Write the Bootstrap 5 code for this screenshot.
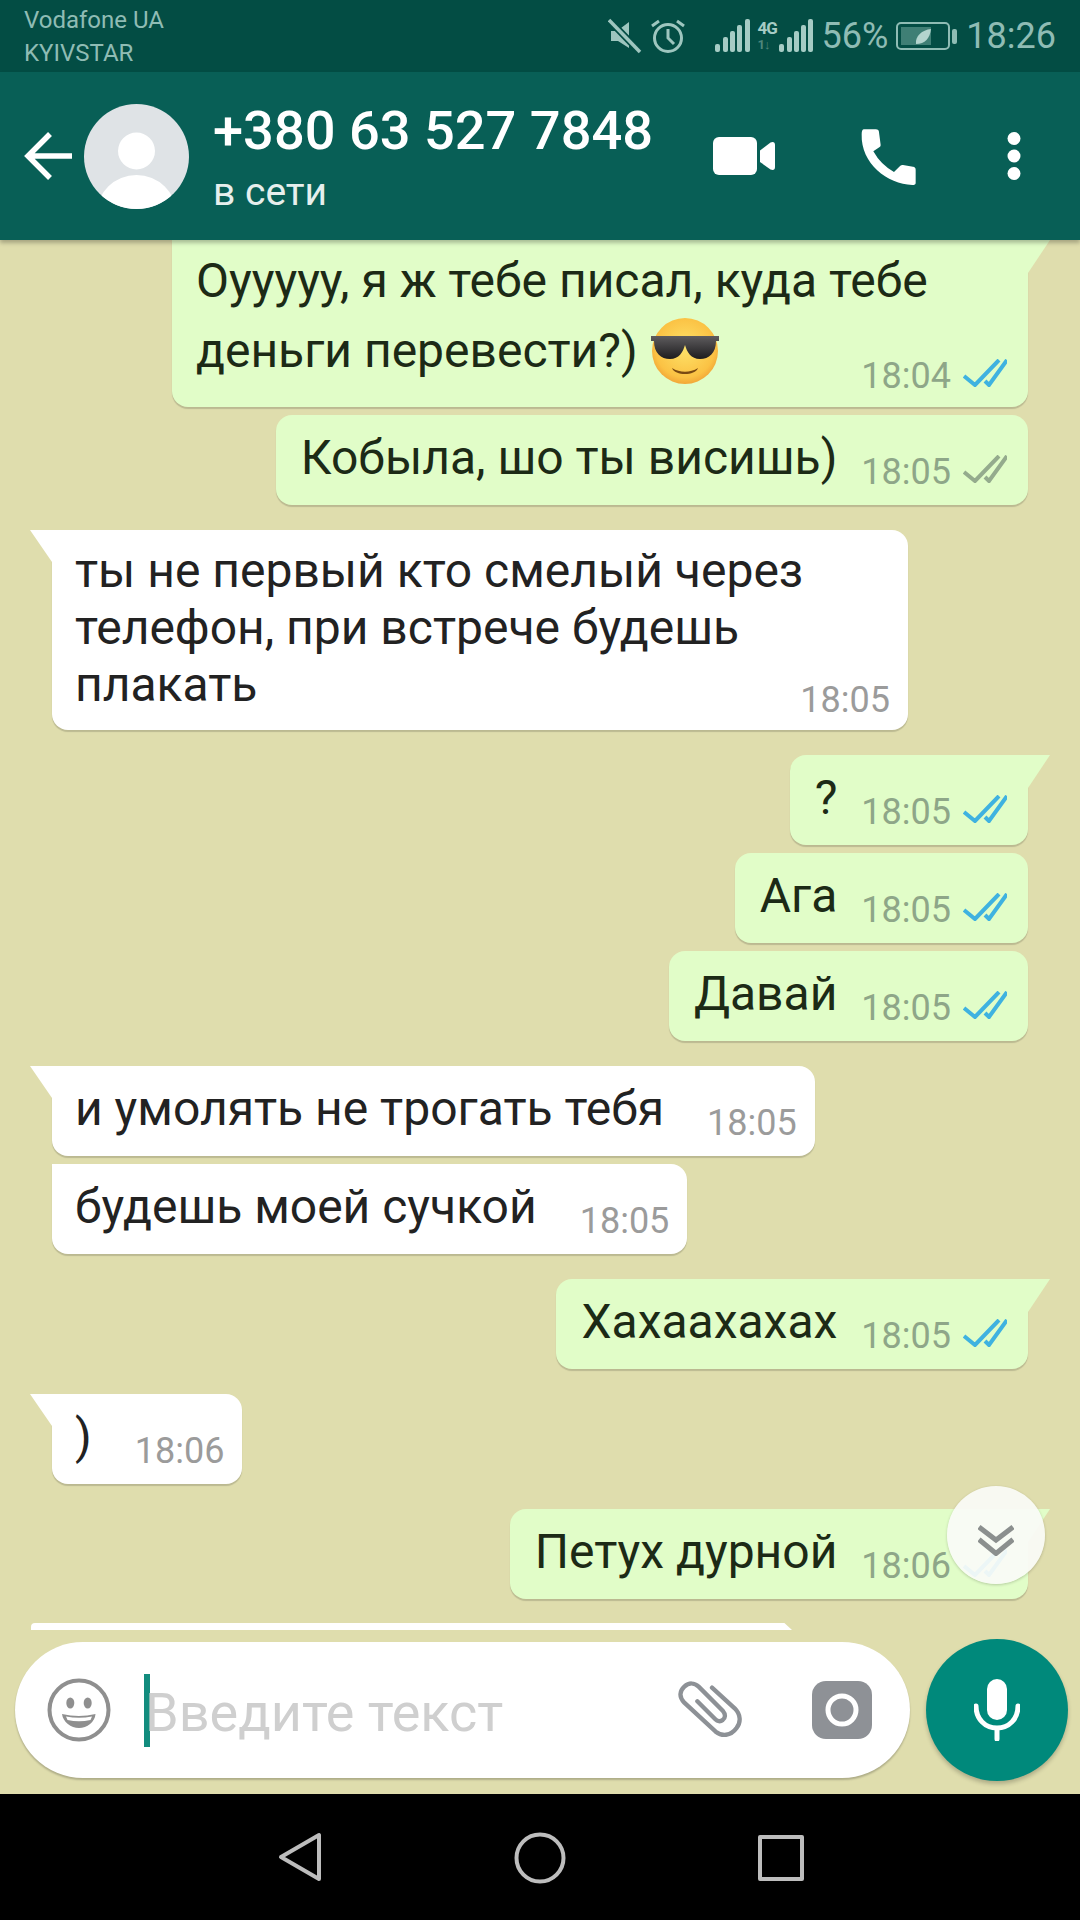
<!doctype html>
<html lang="ru">
<head>
<meta charset="utf-8">
<title>WhatsApp</title>
<link rel="stylesheet" href="https://cdn.jsdelivr.net/npm/bootstrap@5.3.0/dist/css/bootstrap.min.css">
<style>
html,body{margin:0;background:#000}
.phone{width:1080px;height:1920px;overflow:hidden;position:relative;font-family:Roboto,"Liberation Sans",sans-serif;background:#dfddad}
.statusbar{height:72px;background:#034d44;color:#8fbcb4;padding:0 24px;flex:none}
.carrier{font-size:24px;line-height:33px;padding-top:4px}
.status-text{font-size:36px;line-height:72px}
.net{width:21px;height:34px;flex:none;margin-left:8px;font-weight:700;color:#a6ccc5;font-size:17px;line-height:18px;letter-spacing:-1px;white-space:nowrap}
.net-sub{font-size:13px;line-height:16px;color:#4f877d}
.topbar{height:168px;background:#085f56;color:#fff;flex:none;box-shadow:0 3px 4px rgba(0,0,0,.25);position:relative;z-index:3;padding:0 0 0 24px}
.avatar{width:105px;height:105px;margin-left:12px;margin-right:24px;flex:none}
.heading-block{padding-top:4px}
.title{font-size:54.2px;font-weight:500;line-height:60px}
.subtitle{font-size:39px;line-height:46px;margin-top:8px;color:#e6efed}
.acts{margin-left:20px}
.act-phone{margin-left:84px}
.act-more{margin-left:88px;margin-right:59px}
.chat{flex:1 1 auto;padding:0 52px;overflow:hidden;height:1390px}
.msg{font-size:48px;line-height:57px;position:relative;border-radius:0 16px 16px 16px;box-shadow:0 2px 1px rgba(0,0,0,.16);padding:14px 18px 19px 23px;margin-top:8px;min-height:90px;white-space:nowrap}
.msg.gap-before{margin-top:25px}
.msg.in{background:#fff;color:#222;align-self:flex-start}
.msg.out{background:#e1fdc8;color:#1c2a16;align-self:flex-end;padding-left:25px;padding-right:21px;border-radius:16px}
.msg.in .meta{color:#9b9b9b;margin-left:43px}
.msg.out .meta{color:#8ea688;margin-left:24px}
.msg.tailed.out{border-top-right-radius:0}
.msg.tailed.out::after{content:"";position:absolute;left:100%;top:0;width:22px;height:33px;background:#e1fdc8;clip-path:polygon(0 0,100% 0,0 100%)}
.msg.tailed.in{border-top-left-radius:0}
.msg.tailed.in::before{content:"";position:absolute;right:100%;top:0;width:22px;height:32px;background:#fff;clip-path:polygon(0 0,100% 0,100% 100%)}
.line-row{display:flex}
.meta{font-size:36px;line-height:36px;align-self:flex-end;margin-bottom:-4px;display:flex;align-items:center;flex:none}
.ticks{width:44px;height:28px;margin-left:12px;margin-top:-6px}
.stacked{display:grid}
.stacked>*{grid-area:1/1}
.stacked .meta{justify-self:end;align-self:end}
.msg.out.first-msg{width:856px;margin-top:0;height:167px;border-top-left-radius:0;padding-top:6px;padding-left:24px}
.first-msg .copy{line-height:70px}
.first-msg .meta{margin-bottom:-6px}
.third-msg{width:856px;height:200px;padding-top:12px}
.third-msg .meta{margin-bottom:-5px}
.emoji-svg{width:70px;height:70px;vertical-align:-9px;margin:-10px 0 -10px 0}
.cutoff{height:7px;width:761px;background:#fff;margin-left:-21px;margin-top:24px;flex:none;clip-path:polygon(0 0,99% 0,100% 100%,0 100%);border-radius:4px 0 0 0}
.composer{height:164px;padding:10px 12px 14px 15px;flex:none;align-items:center}
.entry{width:895px;height:136px;background:#fff;border-radius:68px;box-shadow:0 2px 2px rgba(0,0,0,.22);padding:0 38px 0 32px}
.caret-bar{width:6px;height:73px;background:#128c7e;margin-left:33px;flex:none}
.ph{font-size:54px;color:#cfcfcf;margin-left:-5px;line-height:73px;margin-top:4px}
.cam-gap{margin-left:70px}
.mic-btn{width:142px;height:142px;border-radius:50%;background:#00897b;margin-left:16px;box-shadow:0 3px 4px rgba(0,0,0,.22);flex:none}
.navbar-bottom{height:126px;background:#000;flex:none;padding:38px 0 0 278px;gap:0}
.nav-home{margin-left:192px}
.nav-recent{margin-left:192px;margin-top:3px}
.sig-gap{margin-left:29px}
.down-btn{position:absolute;left:947px;top:1486px;width:98px;height:98px;border-radius:50%;background:rgba(250,251,248,.93);box-shadow:0 1px 3px rgba(0,0,0,.2);z-index:2}
.chev{margin-top:10px}
</style>
</head>
<body>
<div class="phone d-flex flex-column">
  <div class="statusbar d-flex justify-content-between">
    <div class="carrier"><div>Vodafone UA</div><div>KYIVSTAR</div></div>
    <div class="d-flex align-items-center">
      <svg width="34" height="36" viewBox="0 0 34 36" fill="none" stroke="#9ec6bf" stroke-width="3.5"><path d="M3 13h6l12-9v26l-11-7H3z" fill="#9ec6bf" stroke="none"/><path d="M1 2l31 32" stroke="#034d44" stroke-width="7"/><path d="M1 2l31 32"/></svg>
      <svg class="ms-2" width="36" height="36" viewBox="0 0 36 36" fill="none" stroke="#9ec6bf" stroke-width="3"><circle cx="18" cy="20" r="13.5"/><path d="M18 11v9l6 6M2 8l7-5M34 8l-7-5"/></svg>
      <svg class="sig-gap" width="35" height="34" viewBox="0 0 35 34" fill="#a6ccc5"><rect x="0" y="25" width="5" height="8" rx="2"/><rect x="8" y="18" width="5" height="15" rx="2"/><rect x="15" y="12" width="5" height="21" rx="2"/><rect x="22" y="6" width="5" height="27" rx="2"/><rect x="30" y="0" width="5" height="33" rx="2"/></svg>
      <div class="net"><div>4G</div><div class="net-sub">1↓</div></div>
      <svg width="35" height="34" viewBox="0 0 35 34" fill="#a6ccc5"><rect x="0" y="25" width="5" height="8" rx="2"/><rect x="8" y="18" width="5" height="15" rx="2"/><rect x="15" y="12" width="5" height="21" rx="2"/><rect x="22" y="6" width="5" height="27" rx="2"/><rect x="29" y="0" width="5" height="33" rx="2"/></svg>
      <span class="status-text ms-2">56%</span>
      <svg class="ms-2" width="62" height="28" viewBox="0 0 62 28" fill="none"><rect x="1" y="1" width="52" height="26" rx="4" stroke="#8fbcb4" stroke-width="2"/><rect x="5" y="5" width="30" height="18" fill="#3f7f75"/><path d="M20 22c-1-8 6-14 15-15-1 9-6 15-15 15z" fill="#b4d4ce"/><rect x="56" y="7" width="5" height="15" rx="2" fill="#8fbcb4"/></svg>
      <span class="status-text ms-2">18:26</span>
    </div>
  </div>

  <div class="topbar d-flex align-items-center">
    <svg width="48" height="48" viewBox="0 0 48 48" fill="none" stroke="#fff" stroke-width="5.5"><path d="M48 24H4M26 2L4 24l22 22"/></svg>
    <svg class="avatar" viewBox="0 0 105 105"><defs><clipPath id="avc"><circle cx="52.5" cy="52.5" r="52.5"/></clipPath></defs><circle cx="52.5" cy="52.5" r="52.5" fill="#dfe3e6"/><g clip-path="url(#avc)" fill="#fff"><circle cx="52.5" cy="47" r="18.5"/><ellipse cx="52.5" cy="110" rx="40" ry="39"/></g></svg>
    <div class="flex-grow-1 heading-block">
      <div class="title">+380 63 527 7848</div>
      <div class="subtitle">в сети</div>
    </div>
    <div class="d-flex align-items-center acts">
      <svg width="62" height="38" viewBox="0 0 62 38" fill="#fff"><rect x="0" y="0" width="44" height="38" rx="6"/><path d="M47 13.5l10.500-8q4.500-1.500 4.500 2.500v22q0 4-4.500 2.500l-10.500-7.500z"/></svg>
      <svg class="act-phone" width="60" height="58" viewBox="505 50 180 174" fill="#fff"><path d="M520 57h35q10 0 10 9l5 38q0 4-3 6l-19 13q22 40 62 62l19-19q4-3 8-2l30 5q8 1 8 9v40q0 6-10 6C590 222 510 160 513 72q0-15 7-15z"/></svg>
      <svg class="act-more" width="14" height="48" viewBox="0 0 14 48" fill="#fff"><circle cx="7" cy="6.500" r="6.500"/><circle cx="7" cy="24" r="6.500"/><circle cx="7" cy="41.500" r="6.500"/></svg>
    </div>
  </div>

  <div class="chat d-flex flex-column">
    <div class="msg out tailed first-msg stacked">
      <div class="copy">Оууууу, я ж тебе писал, куда тебе<br>деньги перевести?) <svg class="emoji-svg" viewBox="0 0 70 70"><defs><radialGradient id="fc" cx=".5" cy=".45" r=".6"><stop offset="0" stop-color="#fde36a"/><stop offset=".75" stop-color="#fbc244"/><stop offset="1" stop-color="#ee9a32"/></radialGradient><linearGradient id="lens" x1="0" y1="0" x2="0" y2="1"><stop offset="0" stop-color="#5e5c5e"/><stop offset="1" stop-color="#1d1c1e"/></linearGradient></defs><circle cx="35" cy="35" r="33" fill="url(#fc)"/><path d="M1 20h68v5H66c0 12-7 18-16 18s-13-7-15-14c-2 7-6 14-15 14S4 37 4 25H1z" fill="url(#lens)"/><path d="M22 52c8 5 18 5 26 0-3 8-23 8-26 0z" fill="#7a4a12"/></svg></div>
      <div class="meta">18:04<svg class="ticks" viewBox="0 0 44 28" fill="none" stroke="#3fb2e0" stroke-width="4"><path d="M1 17l11 9L36 1M22 22l4 4L44 1"/></svg></div>
    </div>
    <div class="msg out line-row">Кобыла, шо ты висишь)<div class="meta">18:05<svg class="ticks" viewBox="0 0 44 28" fill="none" stroke="#94ab8d" stroke-width="4"><path d="M1 17l11 9L36 1M22 22l4 4L44 1"/></svg></div></div>
    <div class="msg in tailed gap-before third-msg stacked">
      <div class="copy">ты не первый кто смелый через<br>телефон, при встрече будешь<br>плакать</div>
      <div class="meta">18:05</div>
    </div>
    <div class="msg out tailed gap-before line-row">?<div class="meta">18:05<svg class="ticks" viewBox="0 0 44 28" fill="none" stroke="#3fb2e0" stroke-width="4"><path d="M1 17l11 9L36 1M22 22l4 4L44 1"/></svg></div></div>
    <div class="msg out line-row">Ага<div class="meta">18:05<svg class="ticks" viewBox="0 0 44 28" fill="none" stroke="#3fb2e0" stroke-width="4"><path d="M1 17l11 9L36 1M22 22l4 4L44 1"/></svg></div></div>
    <div class="msg out line-row">Давай<div class="meta">18:05<svg class="ticks" viewBox="0 0 44 28" fill="none" stroke="#3fb2e0" stroke-width="4"><path d="M1 17l11 9L36 1M22 22l4 4L44 1"/></svg></div></div>
    <div class="msg in tailed gap-before line-row">и умолять не трогать тебя<div class="meta">18:05</div></div>
    <div class="msg in line-row">будешь моей сучкой<div class="meta">18:05</div></div>
    <div class="msg out tailed gap-before line-row">Хахаахахах<div class="meta">18:05<svg class="ticks" viewBox="0 0 44 28" fill="none" stroke="#3fb2e0" stroke-width="4"><path d="M1 17l11 9L36 1M22 22l4 4L44 1"/></svg></div></div>
    <div class="msg in tailed gap-before line-row">)<div class="meta">18:06</div></div>
    <div class="msg out tailed gap-before line-row">Петух дурной<div class="meta">18:06<svg class="ticks" viewBox="0 0 44 28" fill="none" stroke="#3fb2e0" stroke-width="4"><path d="M1 17l11 9L36 1M22 22l4 4L44 1"/></svg></div></div>
    <div class="cutoff"></div>
  </div>

  <div class="composer d-flex">
    <div class="entry d-flex align-items-center">
      <svg width="64" height="64" viewBox="0 0 64 64" fill="none" stroke="#8f8f8f" stroke-width="4"><circle cx="32" cy="32" r="29.500"/><ellipse cx="23.300" cy="25" rx="4" ry="5.500" fill="#8f8f8f" stroke="none"/><ellipse cx="40.700" cy="25" rx="4" ry="5.500" fill="#8f8f8f" stroke="none"/><path d="M15 36Q32 40 48.500 36C48 44 40 50 32 50S16 44 15 36z" fill="#8f8f8f" stroke="none"/><path d="M19 38.500Q32 41 45 38.500L43.500 42Q32 44.500 20.500 42z" fill="#fff" stroke="none"/></svg>
      <div class="caret-bar"></div>
      <div class="ph flex-grow-1">Введите текст</div>
      <svg width="65" height="58" viewBox="50 65 195 174" fill="none" stroke="#8d9196" stroke-width="13" stroke-linecap="round"><path d="M155 85l68 62c18 18 20 42 5 60-17 24-44 24-62 10L72 130C55 112 58 95 72 82c14-13 30-12 43 0l72 72c10 12 8 22 0 28-7 6-16 4-22-2l-54-54"/></svg>
      <div class="cam-gap d-flex"><svg width="60" height="58" viewBox="0 0 60 58"><rect width="60" height="58" rx="14" fill="#8e9196"/><circle cx="30" cy="29" r="14" fill="none" stroke="#fff" stroke-width="5"/></svg></div>
    </div>
    <div class="mic-btn d-flex align-items-center justify-content-center">
      <svg width="46" height="62" viewBox="0 0 46 62" fill="none" stroke="#fff" stroke-width="5" stroke-linecap="round"><rect x="13" y="0" width="20" height="41" rx="10" fill="#fff" stroke="none"/><path d="M2 27c0 13 9 22 21 22s21-9 21-22M23 49v11"/></svg>
    </div>
  </div>

  <div class="navbar-bottom d-flex">
    <svg width="44" height="50" viewBox="0 0 44 50" fill="none" stroke="#bdbdbd" stroke-width="4" stroke-linejoin="round"><path d="M41 3v44L3 25z"/></svg>
    <svg class="nav-home" width="52" height="52" viewBox="0 0 52 52" fill="none" stroke="#bdbdbd" stroke-width="4"><circle cx="26" cy="26" r="23.500"/></svg>
    <svg class="nav-recent" width="46" height="46" viewBox="0 0 46 46" fill="none" stroke="#bdbdbd" stroke-width="4" stroke-linejoin="round"><rect x="2" y="2" width="42" height="42"/></svg>
  </div>

  <div class="down-btn d-flex align-items-center justify-content-center">
    <svg class="chev" width="36" height="32" viewBox="0 0 36 32" fill="none" stroke="#8b8f8e" stroke-width="5"><path d="M1 3l17 13 17-13M1 15.500l17 14 17-14"/></svg>
  </div>
</div>
<script src="https://cdn.jsdelivr.net/npm/bootstrap@5.3.0/dist/js/bootstrap.bundle.min.js"></script>
</body>
</html>
